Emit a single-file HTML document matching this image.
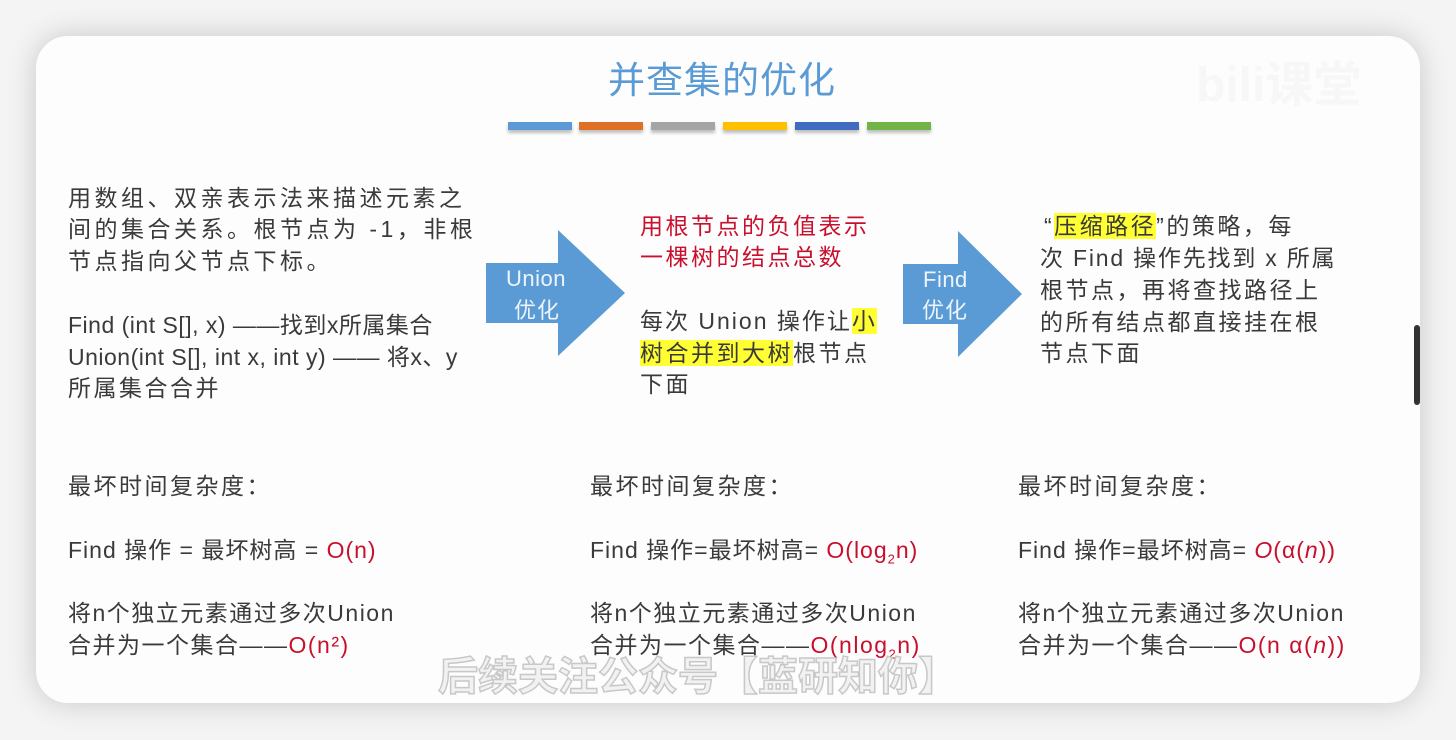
<!DOCTYPE html>
<html><head><meta charset="utf-8"><style>
html,body{margin:0;padding:0;width:1456px;height:740px;overflow:hidden;background:#f4f4f4;}
.card{position:absolute;left:36px;top:36px;width:1384px;height:667px;background:#fdfdfd;border-radius:32px;box-shadow:0 0 30px rgba(0,0,0,0.18);overflow:hidden;}
.t{position:absolute;white-space:nowrap;font-family:"Liberation Sans","Noto Sans CJK SC",sans-serif;font-size:23px;letter-spacing:2.5px;color:#3a3a3a;line-height:32px;}
.r{color:#c8102e;}
.y{background:#ffff33;}
.bar{position:absolute;top:122px;width:64px;height:8px;box-shadow:0 3px 3px rgba(0,0,0,0.25);}
.side{position:absolute;left:1414px;top:325px;width:6px;height:80px;background:#333;border-radius:3px;}
</style></head><body>
<div class="card"></div>
<div class="side"></div>
<div class="t" style="left:608px;top:56px;font-size:37px;color:#5b9bd5;letter-spacing:1px;line-height:50px;">并查集的优化</div>
<div class="bar" style="left:508px;background:#5b9bd5"></div>
<div class="bar" style="left:579px;background:#e07026"></div>
<div class="bar" style="left:651px;background:#a5a5a5"></div>
<div class="bar" style="left:723px;background:#ffc000"></div>
<div class="bar" style="left:795px;background:#3f6cc0"></div>
<div class="bar" style="left:867px;background:#70b545"></div>
<div style="position:absolute;left:1196px;top:45px;font-family:'Liberation Sans','Noto Sans CJK SC',sans-serif;font-size:48px;color:#f7f7f7;font-weight:bold;">bili课堂</div>

<div class="t" style="left:68px;top:182px;letter-spacing:3.5px">用数组、双亲表示法来描述元素之</div>
<div class="t" style="left:68px;top:213px;letter-spacing:3.5px">间的集合关系。根节点为 -1，非根</div>
<div class="t" style="left:68px;top:245px;letter-spacing:3.5px">节点指向父节点下标。</div>
<div class="t" style="left:68px;top:309px;letter-spacing:0.5px">Find (int S[], x) ——找到x所属集合</div>
<div class="t" style="left:68px;top:341px;letter-spacing:0.5px">Union(int S[], int x, int y) —— 将x、y</div>
<div class="t" style="left:68px;top:372px">所属集合合并</div>

<svg style="position:absolute;left:486px;top:230px" width="140" height="127"><polygon points="0,33 72,33 72,0 139,63 72,126 72,93 0,93" fill="#5b9bd5"/></svg>
<div class="t" style="left:506px;top:263px;color:#eef4fb;font-size:22px;letter-spacing:0.5px">Union</div>
<div class="t" style="left:514px;top:295px;color:#eef4fb;font-size:22px;letter-spacing:1px">优化</div>

<div class="t r" style="left:640px;top:210px">用根节点的负值表示</div>
<div class="t r" style="left:640px;top:241px">一棵树的结点总数</div>
<div class="t" style="left:640px;top:305px;letter-spacing:2px">每次 Union 操作让<span class="y">小</span></div>
<div class="t" style="left:640px;top:337px"><span class="y">树合并到大树</span>根节点</div>
<div class="t" style="left:640px;top:368px">下面</div>

<svg style="position:absolute;left:903px;top:231px" width="120" height="127"><polygon points="0,33 55,33 55,0 119,63 55,126 55,93 0,93" fill="#5b9bd5"/></svg>
<div class="t" style="left:923px;top:264px;color:#eef4fb;font-size:22px;letter-spacing:0.5px">Find</div>
<div class="t" style="left:922px;top:295px;color:#eef4fb;font-size:22px;letter-spacing:1px">优化</div>

<div class="t" style="left:1044px;top:210px;letter-spacing:2.5px">“<span class="y">压缩路径</span>”的策略，每</div>
<div class="t" style="left:1040px;top:242px;letter-spacing:1.8px">次 Find 操作先找到 x 所属</div>
<div class="t" style="left:1040px;top:274px">根节点，再将查找路径上</div>
<div class="t" style="left:1040px;top:306px">的所有结点都直接挂在根</div>
<div class="t" style="left:1040px;top:337px">节点下面</div>

<div class="t" style="left:68px;top:470px">最坏时间复杂度：</div>
<div class="t" style="left:68px;top:534px;letter-spacing:1px">Find 操作 = 最坏树高 = <span class="r">O(n)</span></div>
<div class="t" style="left:68px;top:597px;letter-spacing:1.5px">将n个独立元素通过多次Union</div>
<div class="t" style="left:68px;top:629px;letter-spacing:1.5px">合并为一个集合——<span class="r">O(n²)</span></div>

<div class="t" style="left:590px;top:470px">最坏时间复杂度：</div>
<div class="t" style="left:590px;top:534px;letter-spacing:1px">Find 操作=最坏树高= <span class="r">O(log<sub style="font-size:13px">2</sub>n)</span></div>
<div class="t" style="left:590px;top:597px;letter-spacing:1.5px">将n个独立元素通过多次Union</div>
<div class="t" style="left:590px;top:629px;letter-spacing:1.5px">合并为一个集合——<span class="r">O(nlog<sub style="font-size:13px">2</sub>n)</span></div>

<div class="t" style="left:1018px;top:470px">最坏时间复杂度：</div>
<div class="t" style="left:1018px;top:534px;letter-spacing:1px">Find 操作=最坏树高= <span class="r"><i>O</i>(α(<i>n</i>))</span></div>
<div class="t" style="left:1018px;top:597px;letter-spacing:1.5px">将n个独立元素通过多次Union</div>
<div class="t" style="left:1018px;top:629px;letter-spacing:1.5px">合并为一个集合——<span class="r">O(n α(<i>n</i>))</span></div>

<div class="t" style="left:438px;top:650px;font-size:40px;line-height:54px;letter-spacing:0px;color:#f2f2f2;font-weight:bold;-webkit-text-stroke:1.5px #c8c8c8;">后续关注公众号【蓝研知你】</div>
</body></html>
